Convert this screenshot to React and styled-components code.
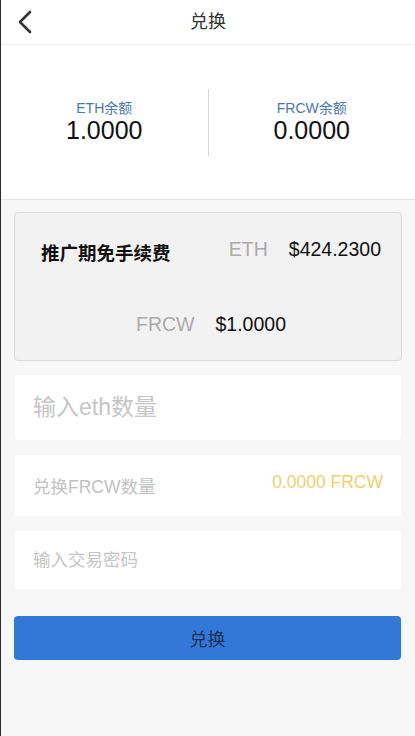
import React from "react";
import styled, { createGlobalStyle } from "styled-components";

const GlobalStyle = createGlobalStyle`
  html, body {
    margin: 0;
    padding: 0;
    background: #f7f7f7;
    font-family: "Liberation Sans", Arial, "Noto Sans CJK SC", sans-serif;
  }
  * { box-sizing: border-box; }
`;

export default function App() {
  return (
    <Page>
      <GlobalStyle />
      <Header>
        <BackButton>
          <svg width="16" height="24" viewBox="0 0 16 24" fill="none">
            <path d="M13 2 L3 12 L13 22" stroke="#333" strokeWidth="2.6" strokeLinecap="round" strokeLinejoin="round" />
          </svg>
        </BackButton>
        <Title>兑换</Title>
      </Header>

      <Balances>
        <BalanceCol>
          <BalanceLabel>ETH余额</BalanceLabel>
          <BalanceValue>1.0000</BalanceValue>
        </BalanceCol>
        <Divider />
        <BalanceCol>
          <BalanceLabel>FRCW余额</BalanceLabel>
          <BalanceValue>0.0000</BalanceValue>
        </BalanceCol>
      </Balances>

      <RateCard>
        <RateRow>
          <Promo>推广期免手续费</Promo>
          <Pair>
            <Coin>ETH</Coin>
            <Price>$424.2300</Price>
          </Pair>
        </RateRow>
        <RateRow center>
          <Pair>
            <Coin>FRCW</Coin>
            <Price>$1.0000</Price>
          </Pair>
        </RateRow>
      </RateCard>

      <Field height={65}>
        <Input size={23} placeholder="输入eth数量" />
      </Field>
      <Field height={61} gap={15}>
        <FieldText>兑换FRCW数量</FieldText>
        <Amount>0.0000 FRCW</Amount>
      </Field>
      <Field height={58} gap={15}>
        <Input size={17.5} type="password" placeholder="输入交易密码" />
      </Field>

      <SubmitButton>兑换</SubmitButton>
    </Page>
  );
}

const Page = styled.div`
  min-height: 736px;
  background: #f7f7f7;
  border-left: 1px solid #2b2b2b;
  padding-bottom: 40px;
`;

const Header = styled.header`
  position: relative;
  height: 45px;
  background: #fff;
  border-bottom: 1px solid #eeeeee;
  display: flex;
  align-items: center;
  justify-content: center;
  padding-bottom: 4px;
`;

const BackButton = styled.div`
  position: absolute;
  left: 16px;
  top: 10px;
  display: flex;
`;

const Title = styled.h1`
  margin: 0;
  font-size: 18px;
  font-weight: normal;
  color: #333;
`;

const Balances = styled.section`
  height: 155px;
  background: #fff;
  border-bottom: 1px solid #e6e6e6;
  display: flex;
  align-items: center;
`;

const BalanceCol = styled.div`
  flex: 1;
  display: flex;
  flex-direction: column;
  align-items: center;
`;

const BalanceLabel = styled.span`
  font-size: 14px;
  color: #4a78b0;
  line-height: 16px;
`;

const BalanceValue = styled.span`
  font-size: 25px;
  color: #111;
  line-height: 28px;
`;

const Divider = styled.div`
  width: 1px;
  height: 67px;
  background: #d6d6d6;
`;

const RateCard = styled.div`
  margin: 12px 13px 0;
  height: 149px;
  background: #f2f2f2;
  border: 1px solid #dcdcdc;
  border-radius: 4px;
  padding: 19px 20px 0 26px;
  display: flex;
  flex-direction: column;
  gap: 41px;
`;

const RateRow = styled.div`
  display: flex;
  align-items: center;
  justify-content: ${(p) => (p.center ? "center" : "space-between")};
  height: 34px;
`;

const Promo = styled.span`
  font-size: 18.5px;
  font-weight: bold;
  color: #111;
  margin-top: 5px;
`;

const Pair = styled.div`
  display: flex;
  align-items: center;
  gap: 21px;
`;

const Coin = styled.span`
  font-size: 19.5px;
  color: #ababab;
`;

const Price = styled.span`
  font-size: 19.5px;
  color: #111;
`;

const Field = styled.div`
  margin: ${(p) => p.gap || 14}px 14px 0;
  height: ${(p) => p.height}px;
  background: #fff;
  border-radius: 4px;
  display: flex;
  align-items: center;
  justify-content: space-between;
  padding: 0 18px 0 18px;
`;

const Input = styled.input`
  flex: 1;
  border: none;
  outline: none;
  background: transparent;
  font-family: inherit;
  font-size: ${(p) => p.size}px;
  color: #333;
  padding: 0;
  &::placeholder {
    color: #c6c6c6;
  }
`;

const FieldText = styled.span`
  font-size: 17.5px;
  color: #c2c2c2;
`;

const Amount = styled.span`
  font-size: 17.5px;
  color: #f2cf6c;
  margin-top: -6px;
`;

const SubmitButton = styled.button`
  display: block;
  margin: 27px 14px 0 13px;
  width: calc(100% - 27px);
  height: 44px;
  border: none;
  border-radius: 4px;
  background: #3378d6;
  color: #1b2f55;
  font-family: inherit;
  font-size: 18px;
`;
